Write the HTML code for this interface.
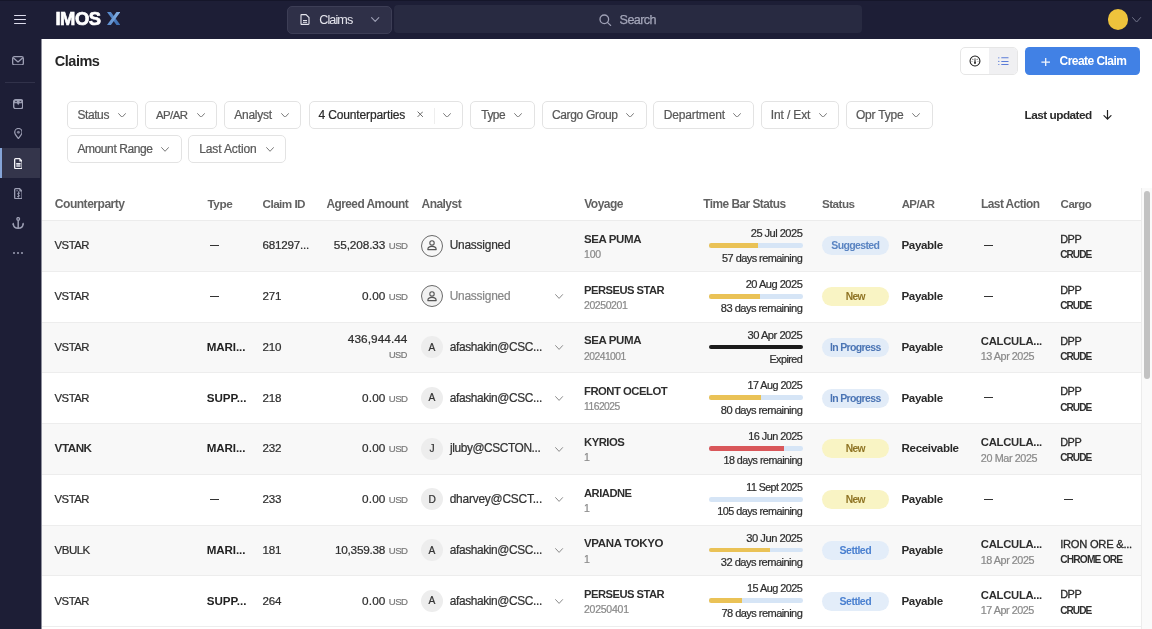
<!DOCTYPE html><html><head><meta charset="utf-8"><style>
*{margin:0;padding:0;box-sizing:border-box}
html,body{width:1152px;height:629px;overflow:hidden;background:#fff;font-family:"Liberation Sans",sans-serif}
#w{position:absolute;left:0;top:0;width:1152px;height:629px;will-change:transform}
.t{position:absolute;white-space:nowrap;line-height:1}
.r{-webkit-text-stroke:0.22px currentColor}
.a{position:absolute;display:block}
.b{position:absolute}
</style></head><body><div id="w">
<div class="b" style="left:0;top:0;width:1152px;height:39px;background:#1d1e36"></div>
<div class="b" style="left:0;top:0;width:41px;height:629px;background:#1d1e36"></div>
<div class="b" style="left:41px;top:39px;width:1px;height:590px;background:#8e8f9c"></div>
<div class="b" style="left:0;top:0;width:1152px;height:1px;background:#15162a"></div>
<div class="b" style="left:14.2px;top:14.55px;width:11.8px;height:1.5px;border-radius:1px;background:#dcdcec"></div>
<div class="b" style="left:14.2px;top:18.75px;width:11.8px;height:1.5px;border-radius:1px;background:#dcdcec"></div>
<div class="b" style="left:14.2px;top:22.95px;width:11.8px;height:1.5px;border-radius:1px;background:#dcdcec"></div>
<div class="t" style="left:55.40px;top:10px;font-size:18.40px;font-weight:700;color:#ffffff;letter-spacing:-0.471px;-webkit-text-stroke:0.7px #fff">IMOS</div>
<svg class="a" style="left:107px;top:12px" width="13.4" height="13" viewBox="0 0 13.4 13"><defs><linearGradient id="gx1" x1="0" y1="0" x2="1" y2="1"><stop offset="0" stop-color="#5b8fd2"/><stop offset="1" stop-color="#3c6db0"/></linearGradient><linearGradient id="gx2" x1="1" y1="0" x2="0" y2="1"><stop offset="0" stop-color="#86b2e6"/><stop offset="1" stop-color="#5a8ccc"/></linearGradient></defs><path d="M0 0 H3.9 L13.4 13 H9.5 Z" fill="url(#gx1)"/><path d="M9.5 0 H13.4 L3.9 13 H0 Z" fill="url(#gx2)"/></svg>
<div class="b" style="left:286.5px;top:5.5px;width:105px;height:28.3px;border-radius:5px;background:#2f3048;border:1px solid #3d3e56"></div>
<svg class="a" style="left:300px;top:14px" width="10" height="11" viewBox="0 0 10 11"><path d="M1 1.2 Q1 0.6 1.6 0.6 L6 0.6 L9 3.6 L9 9.8 Q9 10.4 8.4 10.4 L1.6 10.4 Q1 10.4 1 9.8 Z" fill="none" stroke="#e6e6ee" stroke-width="1.1"/><path d="M3 6.5 H7 M3 8.3 H7" stroke="#e6e6ee" stroke-width="1"/></svg>
<div class="t" style="left:319.20px;top:14px;font-size:12.60px;font-weight:400;color:#e6e6ee;letter-spacing:-0.899px;">Claims</div>
<svg class="a" style="left:371.20px;top:17.20px" width="8.40" height="5.00" viewBox="0 0 8.40 5.00"><path d="M0.6 0.6 L4.20 4.40 L7.80 0.6" fill="none" stroke="#9d9fb5" stroke-width="1.10" stroke-linecap="round" stroke-linejoin="round"/></svg>
<div class="b" style="left:394px;top:5.3px;width:468px;height:28.2px;border-radius:4px;background:#282a41"></div>
<svg class="a" style="left:598.5px;top:13.5px" width="13" height="12" viewBox="0 0 13 12"><circle cx="5.3" cy="5.3" r="4.3" fill="none" stroke="#9fa1b6" stroke-width="1.3"/><path d="M8.4 8.4 L11.6 11.4" stroke="#9fa1b6" stroke-width="1.3" stroke-linecap="round"/></svg>
<div class="t" style="left:619.60px;top:14px;font-size:12.60px;font-weight:400;color:#a3a5b8;letter-spacing:-0.608px;-webkit-text-stroke:0.25px #a3a5b8">Search</div>
<div class="b" style="left:1108px;top:9.3px;width:20.3px;height:20.3px;border-radius:50%;background:#eec33c"></div>
<svg class="a" style="left:1132.40px;top:16.60px" width="9.20" height="5.70" viewBox="0 0 9.20 5.70"><path d="M0.6 0.6 L4.60 5.10 L8.60 0.6" fill="none" stroke="#73758c" stroke-width="1.00" stroke-linecap="round" stroke-linejoin="round"/></svg>
<svg class="a" style="left:12px;top:55.6px" width="12" height="9.6" viewBox="0 0 12 9.6"><rect x="0.65" y="0.65" width="10.7" height="8.3" rx="1.8" fill="none" stroke="#9d9fb4" stroke-width="1.3"/><path d="M1.2 1.8 L6 5.9 L10.8 1.8" fill="none" stroke="#9d9fb4" stroke-width="1.3" stroke-linejoin="round"/></svg>
<div class="b" style="left:5px;top:81.5px;width:30px;height:1px;background:#31324a"></div>
<svg class="a" style="left:12.8px;top:98.6px" width="10.4" height="10.4" viewBox="0 0 10.4 10.4"><rect x="0.7" y="0.7" width="9" height="9" rx="2" fill="none" stroke="#9d9fb4" stroke-width="1.4"/><path d="M0.7 2.2 Q0.7 0.7 2.2 0.7 H8.2 Q9.7 0.7 9.7 2.2 V4.2 H0.7 Z" fill="#9d9fb4"/><rect x="2.2" y="1.9" width="1.6" height="1.2" fill="#1d1e36" opacity="0.8"/><rect x="6.6" y="1.9" width="1.6" height="1.2" fill="#1d1e36" opacity="0.8"/><path d="M3.9 4 L5.2 6.3 L6.5 4 Z" fill="#9d9fb4"/></svg>
<svg class="a" style="left:13.6px;top:127.9px" width="8.8" height="11.2" viewBox="0 0 8.8 11.2"><path d="M4.4 10.5 C2.4 8 0.7 6.2 0.7 4.2 A3.7 3.7 0 0 1 8.1 4.2 C8.1 6.2 6.4 8 4.4 10.5 Z" fill="none" stroke="#9d9fb4" stroke-width="1.25" stroke-linejoin="round"/><circle cx="4.4" cy="4.2" r="1.5" fill="#9d9fb4" opacity="0.75"/></svg>
<div class="b" style="left:0;top:148.3px;width:39.5px;height:29.7px;background:#34354b"></div>
<div class="b" style="left:0;top:148.3px;width:1.6px;height:29.7px;background:#86a5d8"></div>
<svg class="a" style="left:13.7px;top:157.8px" width="8.8" height="11.2" viewBox="0 0 8.8 11.2"><path d="M1.6 0.65 L5.6 0.65 L8.15 3.2 L8.15 9.6 Q8.15 10.55 7.2 10.55 L1.6 10.55 Q0.65 10.55 0.65 9.6 L0.65 1.6 Q0.65 0.65 1.6 0.65 Z" fill="none" stroke="#f6f6fa" stroke-width="1.3"/><path d="M5.4 0.8 L8 3.4 L5.4 3.4 Z" fill="#f6f6fa"/><rect x="2.3" y="5.2" width="4.2" height="3.8" fill="#b8b9c6"/><rect x="2.3" y="5.1" width="4.2" height="0.9" fill="#f6f6fa"/></svg>
<svg class="a" style="left:13.7px;top:187.8px" width="8.8" height="11.2" viewBox="0 0 8.8 11.2"><path d="M1.6 0.65 L5.6 0.65 L8.15 3.2 L8.15 9.6 Q8.15 10.55 7.2 10.55 L1.6 10.55 Q0.65 10.55 0.65 9.6 L0.65 1.6 Q0.65 0.65 1.6 0.65 Z" fill="none" stroke="#9d9fb4" stroke-width="1.3"/><path d="M5.4 0.8 L8 3.4 L5.4 3.4 Z" fill="#9d9fb4"/><path d="M6 5.3 Q5 4.7 4.1 5.1 Q3.2 5.6 4 6.5 L5.1 7.1 Q5.9 7.8 5 8.6 Q4.1 9 3.1 8.5" fill="none" stroke="#9d9fb4" stroke-width="1"/><path d="M4.5 3.4 V9.6" stroke="#9d9fb4" stroke-width="0.9"/><rect x="2.3" y="2" width="1.6" height="1.4" fill="#9d9fb4" opacity="0.6"/></svg>
<svg class="a" style="left:12px;top:217px" width="12.4" height="12" viewBox="0 0 12.4 12"><circle cx="6.2" cy="1.9" r="1.35" fill="none" stroke="#9d9fb4" stroke-width="1.3"/><path d="M6.2 3.2 V11.1" stroke="#9d9fb4" stroke-width="1.5"/><path d="M1.2 6.6 Q1.4 11.2 6.2 11.2 Q11 11.2 11.2 6.6" fill="none" stroke="#9d9fb4" stroke-width="1.4"/><path d="M0.1 7.4 L1.2 5.6 L2.4 7.4 Z" fill="#9d9fb4"/><path d="M10 7.4 L11.2 5.6 L12.3 7.4 Z" fill="#9d9fb4"/></svg>
<div class="b" style="left:13.1px;top:251.8px;width:2.2px;height:2.2px;border-radius:50%;background:#9d9fb4"></div>
<div class="b" style="left:17.1px;top:251.8px;width:2.2px;height:2.2px;border-radius:50%;background:#9d9fb4"></div>
<div class="b" style="left:21.1px;top:251.8px;width:2.2px;height:2.2px;border-radius:50%;background:#9d9fb4"></div>
<div class="t" style="left:54.80px;top:54px;font-size:14.50px;font-weight:700;color:#262626;letter-spacing:-0.492px;">Claims</div>
<div class="b" style="left:960.4px;top:47px;width:57.5px;height:27.8px;border-radius:5px;border:1px solid #e6e6e6;background:#fff;overflow:hidden"><div style="position:absolute;left:27.6px;top:0;width:30px;height:28px;background:#f0f0f2"></div></div>
<svg class="a" style="left:969.4px;top:55.2px" width="12" height="12" viewBox="0 0 12 12"><circle cx="6" cy="6" r="4.95" fill="none" stroke="#151515" stroke-width="1.05"/><path d="M5.8 2.9 L6.2 2.9 L6.75 7.9 L5.25 7.9 Z" fill="#151515"/><circle cx="6" cy="8.1" r="0.85" fill="#151515"/><circle cx="3.9" cy="4.2" r="0.5" fill="#151515"/><circle cx="8.1" cy="4.2" r="0.5" fill="#151515"/><circle cx="3.0" cy="6.4" r="0.45" fill="#151515"/><circle cx="9.0" cy="6.4" r="0.45" fill="#151515"/></svg>
<svg class="a" style="left:998px;top:56.8px" width="11" height="8.6" viewBox="0 0 11 8.6"><g fill="#5b7cd8"><circle cx="0.8" cy="0.8" r="0.65"/><circle cx="0.8" cy="4.4" r="0.65"/><circle cx="0.8" cy="7.6" r="0.65"/><rect x="3.2" y="0.3" width="7.4" height="1.05" rx="0.5"/><rect x="3.2" y="3.9" width="7.4" height="1.05" rx="0.5"/><rect x="3.2" y="7.1" width="7.4" height="1.05" rx="0.5"/></g></svg>
<div class="b" style="left:1025px;top:47.1px;width:114.7px;height:27.9px;border-radius:4.5px;background:#4181e5"></div>
<svg class="a" style="left:1040.6px;top:57.6px" width="9.4" height="8.4" viewBox="0 0 9.4 8.4"><path d="M4.7 0 V8.4 M0.4 4.2 H9" stroke="#f2f6fd" stroke-width="1.3"/></svg>
<div class="t" style="left:1059.50px;top:55px;font-size:12.00px;font-weight:700;color:#ffffff;letter-spacing:-0.535px;">Create Claim</div>
<div class="b" style="left:67.40px;top:100.60px;width:70.50px;height:28.1px;border-radius:5px;border:1px solid #e3e3e3;background:#fff"></div>
<div class="t r" style="left:77.40px;top:109px;font-size:12.00px;font-weight:400;color:#585858;letter-spacing:-0.404px;">Status</div>
<svg class="a" style="left:118.20px;top:112.60px" width="8.10" height="4.90" viewBox="0 0 8.10 4.90"><path d="M0.6 0.6 L4.05 4.30 L7.50 0.6" fill="none" stroke="#777777" stroke-width="1.00" stroke-linecap="round" stroke-linejoin="round"/></svg>
<div class="b" style="left:145.30px;top:100.60px;width:71.30px;height:28.1px;border-radius:5px;border:1px solid #e3e3e3;background:#fff"></div>
<div class="t r" style="left:155.90px;top:110px;font-size:11.40px;font-weight:400;color:#585858;letter-spacing:-0.525px;">AP/AR</div>
<svg class="a" style="left:196.50px;top:112.60px" width="8.10" height="4.90" viewBox="0 0 8.10 4.90"><path d="M0.6 0.6 L4.05 4.30 L7.50 0.6" fill="none" stroke="#777777" stroke-width="1.00" stroke-linecap="round" stroke-linejoin="round"/></svg>
<div class="b" style="left:223.60px;top:100.60px;width:77.90px;height:28.1px;border-radius:5px;border:1px solid #e3e3e3;background:#fff"></div>
<div class="t r" style="left:234.20px;top:109px;font-size:12.00px;font-weight:400;color:#585858;letter-spacing:-0.243px;">Analyst</div>
<svg class="a" style="left:281.20px;top:112.60px" width="8.10" height="4.90" viewBox="0 0 8.10 4.90"><path d="M0.6 0.6 L4.05 4.30 L7.50 0.6" fill="none" stroke="#777777" stroke-width="1.00" stroke-linecap="round" stroke-linejoin="round"/></svg>
<div class="b" style="left:308.70px;top:100.60px;width:154.60px;height:28.1px;border-radius:5px;border:1px solid #e3e3e3;background:#fff"></div>
<div class="t r" style="left:318.40px;top:109px;font-size:12.00px;font-weight:400;color:#2a2a2a;letter-spacing:-0.123px;">4 Counterparties</div>
<svg class="a" style="left:443.40px;top:112.60px" width="8.10" height="4.90" viewBox="0 0 8.10 4.90"><path d="M0.6 0.6 L4.05 4.30 L7.50 0.6" fill="none" stroke="#777777" stroke-width="1.00" stroke-linecap="round" stroke-linejoin="round"/></svg>
<svg class="a" style="left:416.5px;top:111.4px" width="6.5" height="6.5" viewBox="0 0 6.5 6.5"><path d="M0.6 0.6 L5.9 5.9 M5.9 0.6 L0.6 5.9" stroke="#6a6a6a" stroke-width="1"/></svg>
<div class="b" style="left:433.8px;top:107.8px;width:1px;height:16px;background:#eeeeee"></div>
<div class="b" style="left:470.00px;top:100.60px;width:64.50px;height:28.1px;border-radius:5px;border:1px solid #e3e3e3;background:#fff"></div>
<div class="t r" style="left:481.30px;top:110px;font-size:11.90px;font-weight:400;color:#585858;letter-spacing:-0.508px;">Type</div>
<svg class="a" style="left:514.10px;top:112.60px" width="8.10" height="4.90" viewBox="0 0 8.10 4.90"><path d="M0.6 0.6 L4.05 4.30 L7.50 0.6" fill="none" stroke="#777777" stroke-width="1.00" stroke-linecap="round" stroke-linejoin="round"/></svg>
<div class="b" style="left:541.70px;top:100.60px;width:105.00px;height:28.1px;border-radius:5px;border:1px solid #e3e3e3;background:#fff"></div>
<div class="t r" style="left:551.90px;top:109px;font-size:12.00px;font-weight:400;color:#585858;letter-spacing:-0.326px;">Cargo Group</div>
<svg class="a" style="left:626.30px;top:112.60px" width="8.10" height="4.90" viewBox="0 0 8.10 4.90"><path d="M0.6 0.6 L4.05 4.30 L7.50 0.6" fill="none" stroke="#777777" stroke-width="1.00" stroke-linecap="round" stroke-linejoin="round"/></svg>
<div class="b" style="left:653.30px;top:100.60px;width:100.60px;height:28.1px;border-radius:5px;border:1px solid #e3e3e3;background:#fff"></div>
<div class="t r" style="left:663.80px;top:109px;font-size:12.00px;font-weight:400;color:#585858;letter-spacing:-0.167px;">Department</div>
<svg class="a" style="left:733.30px;top:112.60px" width="8.10" height="4.90" viewBox="0 0 8.10 4.90"><path d="M0.6 0.6 L4.05 4.30 L7.50 0.6" fill="none" stroke="#777777" stroke-width="1.00" stroke-linecap="round" stroke-linejoin="round"/></svg>
<div class="b" style="left:760.90px;top:100.60px;width:78.10px;height:28.1px;border-radius:5px;border:1px solid #e3e3e3;background:#fff"></div>
<div class="t r" style="left:770.80px;top:109px;font-size:12.00px;font-weight:400;color:#585858;letter-spacing:-0.135px;">Int / Ext</div>
<svg class="a" style="left:818.70px;top:112.60px" width="8.10" height="4.90" viewBox="0 0 8.10 4.90"><path d="M0.6 0.6 L4.05 4.30 L7.50 0.6" fill="none" stroke="#777777" stroke-width="1.00" stroke-linecap="round" stroke-linejoin="round"/></svg>
<div class="b" style="left:846.30px;top:100.60px;width:86.50px;height:28.1px;border-radius:5px;border:1px solid #e3e3e3;background:#fff"></div>
<div class="t r" style="left:856.00px;top:109px;font-size:12.00px;font-weight:400;color:#585858;letter-spacing:-0.220px;">Opr Type</div>
<svg class="a" style="left:912.30px;top:112.60px" width="8.10" height="4.90" viewBox="0 0 8.10 4.90"><path d="M0.6 0.6 L4.05 4.30 L7.50 0.6" fill="none" stroke="#777777" stroke-width="1.00" stroke-linecap="round" stroke-linejoin="round"/></svg>
<div class="b" style="left:67.40px;top:135.20px;width:114.40px;height:28.1px;border-radius:5px;border:1px solid #e3e3e3;background:#fff"></div>
<div class="t r" style="left:77.40px;top:143px;font-size:12.00px;font-weight:400;color:#585858;letter-spacing:-0.404px;">Amount Range</div>
<svg class="a" style="left:161.30px;top:147.20px" width="8.10" height="4.90" viewBox="0 0 8.10 4.90"><path d="M0.6 0.6 L4.05 4.30 L7.50 0.6" fill="none" stroke="#777777" stroke-width="1.00" stroke-linecap="round" stroke-linejoin="round"/></svg>
<div class="b" style="left:188.30px;top:135.20px;width:97.40px;height:28.1px;border-radius:5px;border:1px solid #e3e3e3;background:#fff"></div>
<div class="t r" style="left:199.30px;top:143px;font-size:12.00px;font-weight:400;color:#585858;letter-spacing:-0.138px;">Last Action</div>
<svg class="a" style="left:265.50px;top:147.20px" width="8.10" height="4.90" viewBox="0 0 8.10 4.90"><path d="M0.6 0.6 L4.05 4.30 L7.50 0.6" fill="none" stroke="#777777" stroke-width="1.00" stroke-linecap="round" stroke-linejoin="round"/></svg>
<div class="t" style="left:1024.60px;top:110px;font-size:11.80px;font-weight:700;color:#2a2a2a;letter-spacing:-0.523px;">Last updated</div>
<svg class="a" style="left:1102.8px;top:110px" width="9" height="10" viewBox="0 0 9 10"><path d="M4.5 0.4 V9.2 M1 5.7 L4.5 9.2 L8 5.7" fill="none" stroke="#222" stroke-width="1.2" stroke-linejoin="round" stroke-linecap="round"/></svg>
<div class="t" style="left:54.80px;top:198px;font-size:12.10px;font-weight:700;color:#626262;letter-spacing:-0.517px;">Counterparty</div>
<div class="t" style="left:207.50px;top:199px;font-size:11.80px;font-weight:700;color:#626262;letter-spacing:-0.489px;">Type</div>
<div class="t" style="left:262.50px;top:198px;font-size:11.70px;font-weight:700;color:#626262;letter-spacing:-0.529px;">Claim ID</div>
<div class="t" style="left:326.40px;top:199px;font-size:11.90px;font-weight:700;color:#626262;letter-spacing:-0.528px;">Agreed Amount</div>
<div class="t" style="left:421.50px;top:198px;font-size:12.00px;font-weight:700;color:#626262;letter-spacing:-0.537px;">Analyst</div>
<div class="t" style="left:584.30px;top:198px;font-size:12.00px;font-weight:700;color:#626262;letter-spacing:-0.544px;">Voyage</div>
<div class="t" style="left:703.30px;top:199px;font-size:11.90px;font-weight:700;color:#626262;letter-spacing:-0.541px;">Time Bar Status</div>
<div class="t" style="left:822.00px;top:198px;font-size:11.70px;font-weight:700;color:#626262;letter-spacing:-0.549px;">Status</div>
<div class="t" style="left:901.70px;top:199px;font-size:11.40px;font-weight:700;color:#626262;letter-spacing:-0.539px;">AP/AR</div>
<div class="t" style="left:981.00px;top:199px;font-size:11.90px;font-weight:700;color:#626262;letter-spacing:-0.538px;">Last Action</div>
<div class="t" style="left:1060.60px;top:199px;font-size:11.50px;font-weight:700;color:#626262;letter-spacing:-0.509px;">Cargo</div>
<div class="b" style="left:42px;top:220px;width:1099px;height:1px;background:#ececec"></div>
<div class="b" style="left:42px;top:221px;width:1099px;height:50px;background:#f8f8f8"></div>
<div class="b" style="left:42px;top:271px;width:1099px;height:1px;background:#ededed"></div>
<div class="t r" style="left:54.60px;top:240px;font-size:11.30px;font-weight:400;color:#2e2e2e;letter-spacing:-0.510px;">VSTAR</div>
<div class="b" style="left:209.6px;top:244.90px;width:9.4px;height:1.2px;background:#333"></div>
<div class="t r" style="left:262.40px;top:239px;font-size:11.60px;font-weight:400;color:#2e2e2e;letter-spacing:-0.184px;">681297...</div>
<div class="t r" style="right:744.46px;top:241px;font-size:9.60px;font-weight:400;color:#7a7a7a;letter-spacing:-0.478px;">USD</div>
<div class="t r" style="right:766.73px;top:240px;font-size:11.80px;font-weight:400;color:#2e2e2e;letter-spacing:-0.114px;">55,208.33</div>
<div class="b" style="left:420.8px;top:234.60px;width:22px;height:22px;border-radius:50%;border:1.2px solid #6a6a6a;background:#f8f8f8"></div>
<svg class="a" style="left:426.8px;top:240.10px" width="10" height="11" viewBox="0 0 10 11"><circle cx="5" cy="2.9" r="2.2" fill="none" stroke="#555" stroke-width="1.1"/><path d="M0.8 9.6 Q0.8 6.4 5 6.4 Q9.2 6.4 9.2 9.6 Z" fill="none" stroke="#555" stroke-width="1.1" stroke-linejoin="round"/></svg>
<div class="t r" style="left:449.70px;top:240px;font-size:11.90px;font-weight:400;color:#333;letter-spacing:-0.215px;">Unassigned</div>
<div class="t" style="left:584.00px;top:234px;font-size:11.50px;font-weight:700;color:#2e2e2e;letter-spacing:-0.394px;">SEA PUMA</div>
<div class="t r" style="left:584.00px;top:249px;font-size:10.50px;font-weight:400;color:#8a8a8a;letter-spacing:-0.200px;">100</div>
<div class="t r" style="right:349.72px;top:228px;font-size:11.10px;font-weight:400;color:#2e2e2e;letter-spacing:-0.529px;">25 Jul 2025</div>
<div class="b" style="left:708.9px;top:243.20px;width:93.8px;height:4.6px;border-radius:2.3px;background:#d6e5f6;overflow:hidden"><div style="width:49.50px;height:100%;background:#eac256"></div></div>
<div class="t r" style="right:349.70px;top:253px;font-size:10.90px;font-weight:400;color:#2e2e2e;letter-spacing:-0.516px;">57 days remaining</div>
<div class="b" style="left:822.4px;top:236.40px;width:66.4px;height:19px;border-radius:9.5px;background:#e2ecf8"></div>
<div class="t" style="left:831.30px;top:240px;font-size:10.50px;font-weight:700;color:#5a84c2;letter-spacing:-0.632px;">Suggested</div>
<div class="t" style="left:901.50px;top:239px;font-size:11.60px;font-weight:700;color:#2a2a2a;letter-spacing:-0.375px;">Payable</div>
<div class="b" style="left:984px;top:244.90px;width:9px;height:1.2px;background:#333"></div>
<div class="t r" style="left:1060.20px;top:234px;font-size:10.90px;font-weight:400;color:#2a2a2a;letter-spacing:-0.450px;-webkit-text-stroke:0.3px #2a2a2a">DPP</div>
<div class="t" style="left:1060.20px;top:250px;font-size:10.10px;font-weight:700;color:#2e2e2e;letter-spacing:-0.951px;">CRUDE</div>
<div class="b" style="left:42px;top:272px;width:1099px;height:50px;background:#ffffff"></div>
<div class="b" style="left:42px;top:322px;width:1099px;height:1px;background:#ededed"></div>
<div class="t r" style="left:54.60px;top:291px;font-size:11.30px;font-weight:400;color:#2e2e2e;letter-spacing:-0.510px;">VSTAR</div>
<div class="b" style="left:209.6px;top:295.65px;width:9.4px;height:1.2px;background:#333"></div>
<div class="t r" style="left:262.40px;top:290px;font-size:11.60px;font-weight:400;color:#2e2e2e;letter-spacing:-0.200px;">271</div>
<div class="t r" style="right:744.46px;top:292px;font-size:9.60px;font-weight:400;color:#7a7a7a;letter-spacing:-0.478px;">USD</div>
<div class="t r" style="right:766.47px;top:291px;font-size:11.80px;font-weight:400;color:#2e2e2e;letter-spacing:0.116px;">0.00</div>
<div class="b" style="left:420.8px;top:285.35px;width:22px;height:22px;border-radius:50%;border:1.2px solid #6a6a6a;background:#f1f1f1"></div>
<svg class="a" style="left:426.8px;top:290.85px" width="10" height="11" viewBox="0 0 10 11"><circle cx="5" cy="2.9" r="2.2" fill="none" stroke="#555" stroke-width="1.1"/><path d="M0.8 9.6 Q0.8 6.4 5 6.4 Q9.2 6.4 9.2 9.6 Z" fill="none" stroke="#555" stroke-width="1.1" stroke-linejoin="round"/></svg>
<div class="t r" style="left:449.70px;top:291px;font-size:11.90px;font-weight:400;color:#888;letter-spacing:-0.215px;">Unassigned</div>
<svg class="a" style="left:555.40px;top:294.25px" width="8.20" height="5.00" viewBox="0 0 8.20 5.00"><path d="M0.6 0.6 L4.10 4.40 L7.60 0.6" fill="none" stroke="#8a8a8a" stroke-width="1.00" stroke-linecap="round" stroke-linejoin="round"/></svg>
<div class="t" style="left:584.00px;top:285px;font-size:11.20px;font-weight:700;color:#2e2e2e;letter-spacing:-0.509px;">PERSEUS STAR</div>
<div class="t r" style="left:584.00px;top:300px;font-size:10.50px;font-weight:400;color:#8a8a8a;letter-spacing:-0.418px;">20250201</div>
<div class="t r" style="right:349.69px;top:279px;font-size:11.10px;font-weight:400;color:#2e2e2e;letter-spacing:-0.513px;">20 Aug 2025</div>
<div class="b" style="left:708.9px;top:293.95px;width:93.8px;height:4.6px;border-radius:2.3px;background:#d6e5f6;overflow:hidden"><div style="width:50.90px;height:100%;background:#eac256"></div></div>
<div class="t r" style="right:349.72px;top:303px;font-size:11.10px;font-weight:400;color:#2e2e2e;letter-spacing:-0.543px;">83 days remaining</div>
<div class="b" style="left:822.4px;top:287.15px;width:66.4px;height:19px;border-radius:9.5px;background:#f9f4c4"></div>
<div class="t" style="left:845.65px;top:292px;font-size:10.30px;font-weight:700;color:#8f7424;letter-spacing:-0.659px;">New</div>
<div class="t" style="left:901.50px;top:290px;font-size:11.60px;font-weight:700;color:#2a2a2a;letter-spacing:-0.375px;">Payable</div>
<div class="b" style="left:984px;top:295.65px;width:9px;height:1.2px;background:#333"></div>
<div class="t r" style="left:1060.20px;top:285px;font-size:10.90px;font-weight:400;color:#2a2a2a;letter-spacing:-0.450px;-webkit-text-stroke:0.3px #2a2a2a">DPP</div>
<div class="t" style="left:1060.20px;top:301px;font-size:10.10px;font-weight:700;color:#2e2e2e;letter-spacing:-0.951px;">CRUDE</div>
<div class="b" style="left:42px;top:323px;width:1099px;height:49px;background:#f8f8f8"></div>
<div class="b" style="left:42px;top:372px;width:1099px;height:1px;background:#ededed"></div>
<div class="t r" style="left:54.60px;top:342px;font-size:11.30px;font-weight:400;color:#2e2e2e;letter-spacing:-0.510px;">VSTAR</div>
<div class="t" style="left:206.70px;top:341px;font-size:11.60px;font-weight:700;color:#222;letter-spacing:-0.087px;">MARI...</div>
<div class="t r" style="left:262.40px;top:341px;font-size:11.60px;font-weight:400;color:#2e2e2e;letter-spacing:-0.200px;">210</div>
<div class="t r" style="right:744.54px;top:334px;font-size:11.80px;font-weight:400;color:#2e2e2e;letter-spacing:0.060px;">436,944.44</div>
<div class="t r" style="right:745.04px;top:351px;font-size:9.20px;font-weight:400;color:#7a7a7a;letter-spacing:-0.456px;">USD</div>
<div class="b" style="left:420.8px;top:336.10px;width:22px;height:22px;border-radius:50%;background:#ededed"></div>
<div class="t r" style="left:428.45px;top:343px;font-size:10.20px;font-weight:400;color:#333;letter-spacing:0.000px;">A</div>
<div class="t r" style="left:449.70px;top:342px;font-size:11.90px;font-weight:400;color:#333;letter-spacing:-0.364px;">afashakin@CSC...</div>
<svg class="a" style="left:555.40px;top:345.00px" width="8.20" height="5.00" viewBox="0 0 8.20 5.00"><path d="M0.6 0.6 L4.10 4.40 L7.60 0.6" fill="none" stroke="#8a8a8a" stroke-width="1.00" stroke-linecap="round" stroke-linejoin="round"/></svg>
<div class="t" style="left:584.00px;top:335px;font-size:11.50px;font-weight:700;color:#2e2e2e;letter-spacing:-0.394px;">SEA PUMA</div>
<div class="t r" style="left:584.00px;top:352px;font-size:10.30px;font-weight:400;color:#8a8a8a;letter-spacing:-0.505px;">20241001</div>
<div class="t r" style="right:349.72px;top:330px;font-size:11.20px;font-weight:400;color:#2e2e2e;letter-spacing:-0.502px;">30 Apr 2025</div>
<div class="b" style="left:708.9px;top:344.70px;width:93.8px;height:4.6px;border-radius:2.3px;background:#d6e5f6;overflow:hidden"><div style="width:93.80px;height:100%;background:#1b1b1b"></div></div>
<div class="t r" style="right:349.73px;top:354px;font-size:10.80px;font-weight:400;color:#2e2e2e;letter-spacing:-0.535px;">Expired</div>
<div class="b" style="left:822.4px;top:337.90px;width:66.4px;height:19px;border-radius:9.5px;background:#e2ecf8"></div>
<div class="t" style="left:829.90px;top:342px;font-size:10.50px;font-weight:700;color:#4a74b4;letter-spacing:-0.635px;">In Progress</div>
<div class="t" style="left:901.50px;top:341px;font-size:11.60px;font-weight:700;color:#2a2a2a;letter-spacing:-0.375px;">Payable</div>
<div class="t" style="left:980.80px;top:336px;font-size:11.30px;font-weight:700;color:#2e2e2e;letter-spacing:-0.291px;">CALCULA...</div>
<div class="t r" style="left:980.80px;top:351px;font-size:10.80px;font-weight:400;color:#8a8a8a;letter-spacing:-0.457px;">13 Apr 2025</div>
<div class="t r" style="left:1060.20px;top:336px;font-size:10.90px;font-weight:400;color:#2a2a2a;letter-spacing:-0.450px;-webkit-text-stroke:0.3px #2a2a2a">DPP</div>
<div class="t" style="left:1060.20px;top:352px;font-size:10.10px;font-weight:700;color:#2e2e2e;letter-spacing:-0.951px;">CRUDE</div>
<div class="b" style="left:42px;top:373px;width:1099px;height:50px;background:#ffffff"></div>
<div class="b" style="left:42px;top:423px;width:1099px;height:1px;background:#ededed"></div>
<div class="t r" style="left:54.60px;top:393px;font-size:11.30px;font-weight:400;color:#2e2e2e;letter-spacing:-0.510px;">VSTAR</div>
<div class="t" style="left:206.70px;top:392px;font-size:11.60px;font-weight:700;color:#222;letter-spacing:0.019px;">SUPP...</div>
<div class="t r" style="left:262.40px;top:392px;font-size:11.60px;font-weight:400;color:#2e2e2e;letter-spacing:-0.200px;">218</div>
<div class="t r" style="right:744.46px;top:394px;font-size:9.60px;font-weight:400;color:#7a7a7a;letter-spacing:-0.478px;">USD</div>
<div class="t r" style="right:766.47px;top:393px;font-size:11.80px;font-weight:400;color:#2e2e2e;letter-spacing:0.116px;">0.00</div>
<div class="b" style="left:420.8px;top:386.85px;width:22px;height:22px;border-radius:50%;background:#ededed"></div>
<div class="t r" style="left:428.45px;top:393px;font-size:10.20px;font-weight:400;color:#333;letter-spacing:0.000px;">A</div>
<div class="t r" style="left:449.70px;top:393px;font-size:11.90px;font-weight:400;color:#333;letter-spacing:-0.364px;">afashakin@CSC...</div>
<svg class="a" style="left:555.40px;top:395.75px" width="8.20" height="5.00" viewBox="0 0 8.20 5.00"><path d="M0.6 0.6 L4.10 4.40 L7.60 0.6" fill="none" stroke="#8a8a8a" stroke-width="1.00" stroke-linecap="round" stroke-linejoin="round"/></svg>
<div class="t" style="left:584.00px;top:386px;font-size:11.30px;font-weight:700;color:#2e2e2e;letter-spacing:-0.496px;">FRONT OCELOT</div>
<div class="t r" style="left:584.00px;top:402px;font-size:10.30px;font-weight:400;color:#8a8a8a;letter-spacing:-0.508px;">1162025</div>
<div class="t r" style="right:349.70px;top:380px;font-size:10.80px;font-weight:400;color:#2e2e2e;letter-spacing:-0.524px;">17 Aug 2025</div>
<div class="b" style="left:708.9px;top:395.45px;width:93.8px;height:4.6px;border-radius:2.3px;background:#d6e5f6;overflow:hidden"><div style="width:52.40px;height:100%;background:#eac256"></div></div>
<div class="t r" style="right:349.72px;top:405px;font-size:11.10px;font-weight:400;color:#2e2e2e;letter-spacing:-0.543px;">80 days remaining</div>
<div class="b" style="left:822.4px;top:388.65px;width:66.4px;height:19px;border-radius:9.5px;background:#e2ecf8"></div>
<div class="t" style="left:829.90px;top:393px;font-size:10.50px;font-weight:700;color:#4a74b4;letter-spacing:-0.635px;">In Progress</div>
<div class="t" style="left:901.50px;top:392px;font-size:11.60px;font-weight:700;color:#2a2a2a;letter-spacing:-0.375px;">Payable</div>
<div class="b" style="left:984px;top:397.15px;width:9px;height:1.2px;background:#333"></div>
<div class="t r" style="left:1060.20px;top:386px;font-size:10.90px;font-weight:400;color:#2a2a2a;letter-spacing:-0.450px;-webkit-text-stroke:0.3px #2a2a2a">DPP</div>
<div class="t" style="left:1060.20px;top:403px;font-size:10.10px;font-weight:700;color:#2e2e2e;letter-spacing:-0.951px;">CRUDE</div>
<div class="b" style="left:42px;top:424px;width:1099px;height:50px;background:#f8f8f8"></div>
<div class="b" style="left:42px;top:474px;width:1099px;height:1px;background:#ededed"></div>
<div class="t" style="left:54.60px;top:442px;font-size:11.70px;font-weight:700;color:#2e2e2e;letter-spacing:-0.482px;">VTANK</div>
<div class="t" style="left:206.70px;top:442px;font-size:11.60px;font-weight:700;color:#222;letter-spacing:-0.087px;">MARI...</div>
<div class="t r" style="left:262.40px;top:442px;font-size:11.60px;font-weight:400;color:#2e2e2e;letter-spacing:-0.200px;">232</div>
<div class="t r" style="right:744.46px;top:444px;font-size:9.60px;font-weight:400;color:#7a7a7a;letter-spacing:-0.478px;">USD</div>
<div class="t r" style="right:766.47px;top:443px;font-size:11.80px;font-weight:400;color:#2e2e2e;letter-spacing:0.116px;">0.00</div>
<div class="b" style="left:420.8px;top:437.60px;width:22px;height:22px;border-radius:50%;background:#ededed"></div>
<div class="t r" style="left:429.40px;top:444px;font-size:10.20px;font-weight:400;color:#333;letter-spacing:0.000px;">J</div>
<div class="t r" style="left:450.00px;top:443px;font-size:11.90px;font-weight:400;color:#333;letter-spacing:-0.408px;">jluby@CSCTON...</div>
<svg class="a" style="left:555.40px;top:446.50px" width="8.20" height="5.00" viewBox="0 0 8.20 5.00"><path d="M0.6 0.6 L4.10 4.40 L7.60 0.6" fill="none" stroke="#8a8a8a" stroke-width="1.00" stroke-linecap="round" stroke-linejoin="round"/></svg>
<div class="t" style="left:584.00px;top:437px;font-size:11.30px;font-weight:700;color:#2e2e2e;letter-spacing:-0.507px;">KYRIOS</div>
<div class="t r" style="left:584.00px;top:452px;font-size:10.50px;font-weight:400;color:#8a8a8a;letter-spacing:-0.200px;">1</div>
<div class="t r" style="right:349.74px;top:431px;font-size:10.90px;font-weight:400;color:#2e2e2e;letter-spacing:-0.540px;">16 Jun 2025</div>
<div class="b" style="left:708.9px;top:446.20px;width:93.8px;height:4.6px;border-radius:2.3px;background:#d6e5f6;overflow:hidden"><div style="width:75.10px;height:100%;background:#d9575a"></div></div>
<div class="t r" style="right:349.68px;top:455px;font-size:10.70px;font-weight:400;color:#2e2e2e;letter-spacing:-0.501px;">18 days remaining</div>
<div class="b" style="left:822.4px;top:439.40px;width:66.4px;height:19px;border-radius:9.5px;background:#f9f4c4"></div>
<div class="t" style="left:845.65px;top:444px;font-size:10.30px;font-weight:700;color:#8f7424;letter-spacing:-0.659px;">New</div>
<div class="t" style="left:901.50px;top:442px;font-size:11.60px;font-weight:700;color:#2a2a2a;letter-spacing:-0.346px;">Receivable</div>
<div class="t" style="left:980.80px;top:437px;font-size:11.30px;font-weight:700;color:#2e2e2e;letter-spacing:-0.291px;">CALCULA...</div>
<div class="t r" style="left:980.80px;top:453px;font-size:10.80px;font-weight:400;color:#8a8a8a;letter-spacing:-0.384px;">20 Mar 2025</div>
<div class="t r" style="left:1060.20px;top:437px;font-size:10.90px;font-weight:400;color:#2a2a2a;letter-spacing:-0.450px;-webkit-text-stroke:0.3px #2a2a2a">DPP</div>
<div class="t" style="left:1060.20px;top:453px;font-size:10.10px;font-weight:700;color:#2e2e2e;letter-spacing:-0.951px;">CRUDE</div>
<div class="b" style="left:42px;top:475px;width:1099px;height:50px;background:#ffffff"></div>
<div class="b" style="left:42px;top:525px;width:1099px;height:1px;background:#ededed"></div>
<div class="t r" style="left:54.60px;top:494px;font-size:11.30px;font-weight:400;color:#2e2e2e;letter-spacing:-0.510px;">VSTAR</div>
<div class="b" style="left:209.6px;top:498.65px;width:9.4px;height:1.2px;background:#333"></div>
<div class="t r" style="left:262.40px;top:493px;font-size:11.60px;font-weight:400;color:#2e2e2e;letter-spacing:-0.200px;">233</div>
<div class="t r" style="right:744.46px;top:495px;font-size:9.60px;font-weight:400;color:#7a7a7a;letter-spacing:-0.478px;">USD</div>
<div class="t r" style="right:766.47px;top:494px;font-size:11.80px;font-weight:400;color:#2e2e2e;letter-spacing:0.116px;">0.00</div>
<div class="b" style="left:420.8px;top:488.35px;width:22px;height:22px;border-radius:50%;background:#ededed"></div>
<div class="t r" style="left:428.50px;top:495px;font-size:10.20px;font-weight:400;color:#333;letter-spacing:0.000px;">D</div>
<div class="t r" style="left:449.70px;top:494px;font-size:11.90px;font-weight:400;color:#333;letter-spacing:-0.203px;">dharvey@CSCT...</div>
<svg class="a" style="left:555.40px;top:497.25px" width="8.20" height="5.00" viewBox="0 0 8.20 5.00"><path d="M0.6 0.6 L4.10 4.40 L7.60 0.6" fill="none" stroke="#8a8a8a" stroke-width="1.00" stroke-linecap="round" stroke-linejoin="round"/></svg>
<div class="t" style="left:584.00px;top:488px;font-size:11.20px;font-weight:700;color:#2e2e2e;letter-spacing:-0.486px;">ARIADNE</div>
<div class="t r" style="left:584.00px;top:503px;font-size:10.50px;font-weight:400;color:#8a8a8a;letter-spacing:-0.200px;">1</div>
<div class="t r" style="right:349.72px;top:482px;font-size:10.60px;font-weight:400;color:#2e2e2e;letter-spacing:-0.525px;">11 Sept 2025</div>
<div class="b" style="left:708.9px;top:496.95px;width:93.8px;height:4.6px;border-radius:2.3px;background:#d6e5f6;overflow:hidden"><div style="width:0.00px;height:100%;background:#eac256"></div></div>
<div class="t r" style="right:349.73px;top:506px;font-size:10.80px;font-weight:400;color:#2e2e2e;letter-spacing:-0.511px;">105 days remaining</div>
<div class="b" style="left:822.4px;top:490.15px;width:66.4px;height:19px;border-radius:9.5px;background:#f9f4c4"></div>
<div class="t" style="left:845.65px;top:495px;font-size:10.30px;font-weight:700;color:#8f7424;letter-spacing:-0.659px;">New</div>
<div class="t" style="left:901.50px;top:493px;font-size:11.60px;font-weight:700;color:#2a2a2a;letter-spacing:-0.375px;">Payable</div>
<div class="b" style="left:984px;top:498.65px;width:9px;height:1.2px;background:#333"></div>
<div class="b" style="left:1063.5px;top:498.65px;width:9px;height:1.2px;background:#333"></div>
<div class="b" style="left:42px;top:526px;width:1099px;height:49px;background:#f8f8f8"></div>
<div class="b" style="left:42px;top:575px;width:1099px;height:1px;background:#ededed"></div>
<div class="t r" style="left:54.60px;top:545px;font-size:11.50px;font-weight:400;color:#2e2e2e;letter-spacing:-0.505px;">VBULK</div>
<div class="t" style="left:206.70px;top:544px;font-size:11.60px;font-weight:700;color:#222;letter-spacing:-0.087px;">MARI...</div>
<div class="t r" style="left:262.40px;top:544px;font-size:11.60px;font-weight:400;color:#2e2e2e;letter-spacing:-0.200px;">181</div>
<div class="t r" style="right:744.46px;top:546px;font-size:9.60px;font-weight:400;color:#7a7a7a;letter-spacing:-0.478px;">USD</div>
<div class="t r" style="right:766.88px;top:545px;font-size:11.80px;font-weight:400;color:#2e2e2e;letter-spacing:-0.264px;">10,359.38</div>
<div class="b" style="left:420.8px;top:539.10px;width:22px;height:22px;border-radius:50%;background:#ededed"></div>
<div class="t r" style="left:428.45px;top:546px;font-size:10.20px;font-weight:400;color:#333;letter-spacing:0.000px;">A</div>
<div class="t r" style="left:449.70px;top:545px;font-size:11.90px;font-weight:400;color:#333;letter-spacing:-0.364px;">afashakin@CSC...</div>
<svg class="a" style="left:555.40px;top:548.00px" width="8.20" height="5.00" viewBox="0 0 8.20 5.00"><path d="M0.6 0.6 L4.10 4.40 L7.60 0.6" fill="none" stroke="#8a8a8a" stroke-width="1.00" stroke-linecap="round" stroke-linejoin="round"/></svg>
<div class="t" style="left:584.00px;top:538px;font-size:11.50px;font-weight:700;color:#2e2e2e;letter-spacing:-0.336px;">VPANA TOKYO</div>
<div class="t r" style="left:584.00px;top:554px;font-size:10.50px;font-weight:400;color:#8a8a8a;letter-spacing:-0.200px;">1</div>
<div class="t r" style="right:349.72px;top:533px;font-size:11.20px;font-weight:400;color:#2e2e2e;letter-spacing:-0.516px;">30 Jun 2025</div>
<div class="b" style="left:708.9px;top:547.70px;width:93.8px;height:4.6px;border-radius:2.3px;background:#d6e5f6;overflow:hidden"><div style="width:60.70px;height:100%;background:#eac256"></div></div>
<div class="t r" style="right:349.72px;top:557px;font-size:11.10px;font-weight:400;color:#2e2e2e;letter-spacing:-0.543px;">32 days remaining</div>
<div class="b" style="left:822.4px;top:540.90px;width:66.4px;height:19px;border-radius:9.5px;background:#e3edf9"></div>
<div class="t" style="left:839.55px;top:545px;font-size:10.50px;font-weight:700;color:#4a80d0;letter-spacing:-0.486px;">Settled</div>
<div class="t" style="left:901.50px;top:544px;font-size:11.60px;font-weight:700;color:#2a2a2a;letter-spacing:-0.375px;">Payable</div>
<div class="t" style="left:980.80px;top:539px;font-size:11.30px;font-weight:700;color:#2e2e2e;letter-spacing:-0.291px;">CALCULA...</div>
<div class="t r" style="left:980.80px;top:555px;font-size:10.80px;font-weight:400;color:#8a8a8a;letter-spacing:-0.457px;">18 Apr 2025</div>
<div class="t r" style="left:1060.20px;top:539px;font-size:11.20px;font-weight:400;color:#2a2a2a;letter-spacing:-0.268px;-webkit-text-stroke:0.3px #2a2a2a">IRON ORE &amp;...</div>
<div class="t" style="left:1060.20px;top:555px;font-size:10.20px;font-weight:700;color:#2e2e2e;letter-spacing:-0.809px;">CHROME ORE</div>
<div class="b" style="left:42px;top:576px;width:1099px;height:50px;background:#ffffff"></div>
<div class="b" style="left:42px;top:626px;width:1099px;height:1px;background:#ededed"></div>
<div class="t r" style="left:54.60px;top:596px;font-size:11.30px;font-weight:400;color:#2e2e2e;letter-spacing:-0.510px;">VSTAR</div>
<div class="t" style="left:206.70px;top:595px;font-size:11.60px;font-weight:700;color:#222;letter-spacing:0.019px;">SUPP...</div>
<div class="t r" style="left:262.40px;top:595px;font-size:11.60px;font-weight:400;color:#2e2e2e;letter-spacing:-0.200px;">264</div>
<div class="t r" style="right:744.46px;top:597px;font-size:9.60px;font-weight:400;color:#7a7a7a;letter-spacing:-0.478px;">USD</div>
<div class="t r" style="right:766.47px;top:596px;font-size:11.80px;font-weight:400;color:#2e2e2e;letter-spacing:0.116px;">0.00</div>
<div class="b" style="left:420.8px;top:589.85px;width:22px;height:22px;border-radius:50%;background:#ededed"></div>
<div class="t r" style="left:428.45px;top:596px;font-size:10.20px;font-weight:400;color:#333;letter-spacing:0.000px;">A</div>
<div class="t r" style="left:449.70px;top:596px;font-size:11.90px;font-weight:400;color:#333;letter-spacing:-0.364px;">afashakin@CSC...</div>
<svg class="a" style="left:555.40px;top:598.75px" width="8.20" height="5.00" viewBox="0 0 8.20 5.00"><path d="M0.6 0.6 L4.10 4.40 L7.60 0.6" fill="none" stroke="#8a8a8a" stroke-width="1.00" stroke-linecap="round" stroke-linejoin="round"/></svg>
<div class="t" style="left:584.00px;top:589px;font-size:11.20px;font-weight:700;color:#2e2e2e;letter-spacing:-0.509px;">PERSEUS STAR</div>
<div class="t r" style="left:584.00px;top:604px;font-size:10.50px;font-weight:400;color:#8a8a8a;letter-spacing:-0.246px;">20250401</div>
<div class="t r" style="right:349.72px;top:583px;font-size:10.90px;font-weight:400;color:#2e2e2e;letter-spacing:-0.540px;">15 Aug 2025</div>
<div class="b" style="left:708.9px;top:598.45px;width:93.8px;height:4.6px;border-radius:2.3px;background:#d6e5f6;overflow:hidden"><div style="width:32.90px;height:100%;background:#eac256"></div></div>
<div class="t r" style="right:349.72px;top:608px;font-size:11.00px;font-weight:400;color:#2e2e2e;letter-spacing:-0.536px;">78 days remaining</div>
<div class="b" style="left:822.4px;top:591.65px;width:66.4px;height:19px;border-radius:9.5px;background:#e3edf9"></div>
<div class="t" style="left:839.55px;top:596px;font-size:10.50px;font-weight:700;color:#4a80d0;letter-spacing:-0.486px;">Settled</div>
<div class="t" style="left:901.50px;top:595px;font-size:11.60px;font-weight:700;color:#2a2a2a;letter-spacing:-0.375px;">Payable</div>
<div class="t" style="left:980.80px;top:590px;font-size:11.30px;font-weight:700;color:#2e2e2e;letter-spacing:-0.291px;">CALCULA...</div>
<div class="t r" style="left:980.80px;top:605px;font-size:10.80px;font-weight:400;color:#8a8a8a;letter-spacing:-0.477px;">17 Apr 2025</div>
<div class="t r" style="left:1060.20px;top:589px;font-size:10.90px;font-weight:400;color:#2a2a2a;letter-spacing:-0.450px;-webkit-text-stroke:0.3px #2a2a2a">DPP</div>
<div class="t" style="left:1060.20px;top:606px;font-size:10.10px;font-weight:700;color:#2e2e2e;letter-spacing:-0.951px;">CRUDE</div>
<div class="b" style="left:1140.7px;top:187.5px;width:11.3px;height:442px;background:#fafafa;border-left:1px solid #ececec"></div>
<div class="b" style="left:1144px;top:191px;width:6.3px;height:187.5px;border-radius:3px;background:#c2c2c2"></div>
</div></body></html>
